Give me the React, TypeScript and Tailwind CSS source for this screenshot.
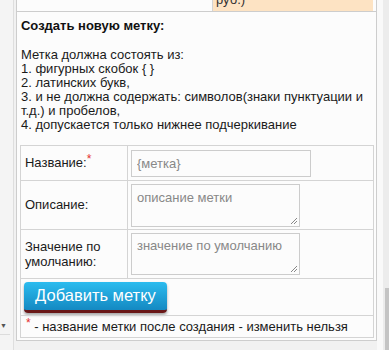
import React from 'react'

const font = { fontFamily: '"Liberation Sans", Arial, sans-serif' }

function Resize() {
  return (
    <svg className="absolute right-[1px] bottom-[1px]" width="8" height="8" viewBox="0 0 8 8">
      <path d="M7 1 L1 7 M7 4 L4 7" stroke="#888" strokeWidth="1" />
    </svg>
  )
}

export default function App() {
  return (
    <div className="w-[389px] h-[350px] bg-[#f1f1f1] flex overflow-hidden text-[#1a1a1a]" style={font}>
      {/* left strip */}
      <div className="w-[14px] h-full bg-[#f4f4f4] border-r border-[#dedede] flex flex-col">
        <div className="mt-[322px] text-[7px] leading-none text-[#555]">▼</div>
        <div className="mt-[5px] border-t border-[#dcdcdc] w-[10px]" />
      </div>

      {/* main panel */}
      <div className="ml-[2px] w-[362px] h-[341px] border-x border-b border-[#cdcdcd] bg-[#fcfcfc] flex flex-col">
        {/* top row cut off */}
        <div className="flex h-[12px] border-b border-[#cdcdcd] shrink-0">
          <div className="w-[196px] border-r border-[#d4d4d4]" />
          <div className="w-[160px] bg-[#fde3c3] overflow-hidden">
            <div className="-mt-[8px] ml-[3px] text-[13px] leading-[15px] text-[#333]">руб.)</div>
          </div>
        </div>

        <div className="pl-[4px] pr-[3px]">
          <div className="mt-[6px] text-[13px] font-bold leading-[16px] text-[#111]">Создать новую метку:</div>
          <div className="mt-[14px] text-[13px] leading-[14px]">
            <div>Метка должна состоять из:</div>
            <div>1. фигурных скобок {'{ }'}</div>
            <div>2. латинских букв,</div>
            <div>3. и не должна содержать: символов(знаки пунктуации и т.д.) и пробелов,</div>
            <div>4. допускается только нижнее подчеркивание</div>
          </div>
        </div>

        <table className="mt-[13px] ml-[3px] w-[354px] border-collapse border border-[#cfcfcf] text-[13px]">
          <tbody>
            <tr>
              <td className="h-[35px] w-[107px] border border-[#d4d4d4] pl-[4px] p-0">
                Название:<span className="text-[#e53030] align-top text-[12px] leading-none">*</span>
              </td>
              <td className="h-[35px] border border-[#d4d4d4] pl-[3px]">
                <input
                  className="block w-[180px] h-[27px] border border-[#cccccc] bg-[#fcfcfc] px-[5px] text-[13px] placeholder:text-[#888]"
                  placeholder="{метка}"
                  style={font}
                />
              </td>
            </tr>
            <tr>
              <td className="h-[49px] border border-[#d4d4d4] pl-[4px]">Описание:</td>
              <td className="h-[49px] border border-[#d4d4d4] pl-[3px]">
                <div className="relative w-[169px] h-[43px] border border-[#cccccc] bg-[#fcfcfc] px-[5px] pt-[5px] text-[#888] leading-[15px]">
                  описание метки
                  <Resize />
                </div>
              </td>
            </tr>
            <tr>
              <td className="h-[49px] border border-[#d4d4d4] pl-[4px] leading-[15px]">
                Значение по
                <br />
                умолчанию:
              </td>
              <td className="h-[49px] border border-[#d4d4d4] pl-[3px]">
                <div className="relative w-[169px] h-[42px] border border-[#cccccc] bg-[#fcfcfc] px-[5px] pt-[4px] text-[#888] leading-[15px]">
                  значение по умолчанию
                  <Resize />
                </div>
              </td>
            </tr>
            <tr>
              <td colSpan={2} className="h-[37px] border border-[#d4d4d4] pl-[3px]">
                <button
                  className="block w-[143px] h-[31px] rounded-[4px] bg-gradient-to-b from-[#2cbcef] to-[#1489c2] border-b-[3px] border-[#6a1818] text-white text-[16.5px] leading-none shadow-[0_2px_3px_rgba(0,0,0,0.35)]"
                  style={font}
                >
                  Добавить метку
                </button>
              </td>
            </tr>
            <tr>
              <td colSpan={2} className="h-[22px] border border-[#d4d4d4] pl-[5px]">
                <span className="text-[#e53030] align-top text-[12px] leading-none">*</span> - название метки после создания - изменить нельзя
              </td>
            </tr>
          </tbody>
        </table>
      </div>

      {/* right strip */}
      <div className="w-[6px] h-full bg-[#f9f9f9]" />
      <div className="w-[6px] h-full bg-[#ececec] flex flex-col">
        <div className="mt-[288px] ml-[2px] w-[4px] flex-1 bg-[#c4c4c4]" />
      </div>
    </div>
  )
}
